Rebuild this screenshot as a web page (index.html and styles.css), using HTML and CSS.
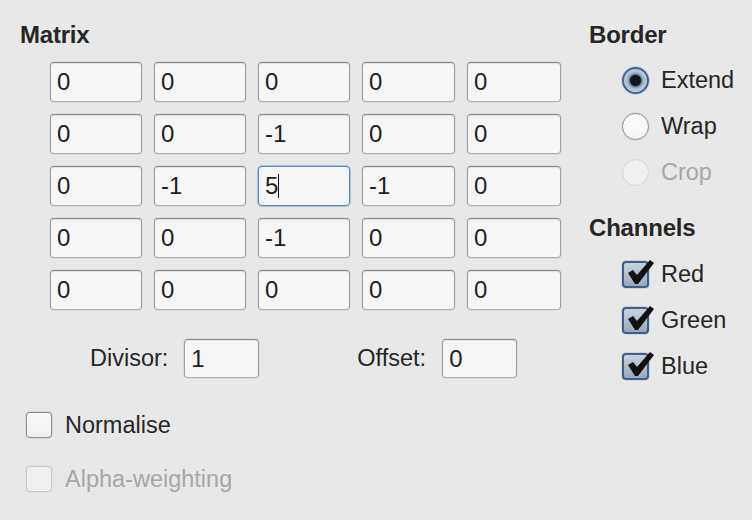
FILE: index.html
```html
<!DOCTYPE html>
<html>
<head>
<meta charset="utf-8">
<link rel="stylesheet" href="styles.css">
</head>
<body>
<div class="panel">
  <div class="left">
    <div class="heading">Matrix</div>
    <div class="grid">
      <div class="field">0</div><div class="field">0</div><div class="field">0</div><div class="field">0</div><div class="field">0</div>
      <div class="field">0</div><div class="field">0</div><div class="field">-1</div><div class="field">0</div><div class="field">0</div>
      <div class="field">0</div><div class="field">-1</div><div class="field focus">5<span class="caret"></span></div><div class="field">-1</div><div class="field">0</div>
      <div class="field">0</div><div class="field">0</div><div class="field">-1</div><div class="field">0</div><div class="field">0</div>
      <div class="field">0</div><div class="field">0</div><div class="field">0</div><div class="field">0</div><div class="field">0</div>
    </div>
    <div class="params">
      <div class="param divisor"><span class="plabel">Divisor:</span><div class="field small">1</div></div>
      <div class="param offset"><span class="plabel">Offset:</span><div class="field small">0</div></div>
    </div>
    <div class="opt normalise"><span class="cb"></span><span class="optlabel">Normalise</span></div>
    <div class="opt alpha disabled"><span class="cb dis"></span><span class="optlabel">Alpha-weighting</span></div>
  </div>
  <div class="right">
    <div class="heading">Border</div>
    <div class="choices">
      <div class="choice"><span class="radio on"></span><span class="clabel">Extend</span></div>
      <div class="choice"><span class="radio"></span><span class="clabel">Wrap</span></div>
      <div class="choice disabled"><span class="radio dis"></span><span class="clabel">Crop</span></div>
    </div>
    <div class="heading channels">Channels</div>
    <div class="choices checks">
      <div class="choice"><span class="cb on"><svg class="tick" viewBox="0 0 30 30" width="30" height="30"><path d="M3 15 L8 12 L12 17 L25 2 L29 5 L13 26 L10 26 Z" fill="#111"/></svg></span><span class="clabel">Red</span></div>
      <div class="choice"><span class="cb on"><svg class="tick" viewBox="0 0 30 30" width="30" height="30"><path d="M3 15 L8 12 L12 17 L25 2 L29 5 L13 26 L10 26 Z" fill="#111"/></svg></span><span class="clabel">Green</span></div>
      <div class="choice"><span class="cb on"><svg class="tick" viewBox="0 0 30 30" width="30" height="30"><path d="M3 15 L8 12 L12 17 L25 2 L29 5 L13 26 L10 26 Z" fill="#111"/></svg></span><span class="clabel">Blue</span></div>
    </div>
  </div>
</div>
</body>
</html>
```
FILE: styles.css
```css
html, body {
  margin: 0;
  padding: 0;
  background: #e8e8e8;
  width: 752px;
  height: 520px;
  overflow: hidden;
}
body {
  font-family: "Liberation Sans", Arial, sans-serif;
  color: #262626;
  font-size: 23.5px;
}
.panel {
  display: flex;
}
.left {
  width: 569px;
  padding-left: 20px;
}
.heading {
  font-weight: bold;
  font-size: 24px;
  line-height: 28px;
  margin-top: 21px;
  letter-spacing: -0.2px;
}
.grid {
  display: grid;
  grid-template-columns: 92px 92px 92px 93px 94px;
  grid-auto-rows: 40px;
  column-gap: 12px;
  row-gap: 12px;
  margin-left: 30px;
  margin-top: 13px;
}
.field {
  box-sizing: border-box;
  border: 1px solid #a3a09c;
  border-top-color: #8c8985;
  border-bottom-color: #b2b0ad;
  border-radius: 4px;
  background: #f6f6f6;
  box-shadow: 0 0 0 1px #dcdcdc, inset 0 1px 1px rgba(0,0,0,0.08);
  font-size: 24px;
  line-height: 38px;
  padding-left: 6px;
  color: #222;
  position: relative;
}
.field.focus {
  border: 1px solid #5d86b8;
  box-shadow: 0 0 0 1px #a9c1de;
}
.caret {
  display: inline-block;
  width: 1px;
  height: 24px;
  background: #111;
  vertical-align: -4px;
  margin-left: 0;
}
.params {
  display: flex;
  margin-top: 29px;
  height: 38px;
}
.param {
  display: flex;
  align-items: center;
}
.divisor {
  margin-left: 70px;
}
.offset {
  margin-left: 98px;
}
.plabel {
  margin-right: 16px;
}
.field.small {
  width: 75px;
  height: 39px;
  line-height: 37px;
}
.opt {
  display: flex;
  align-items: center;
  height: 28px;
}
.normalise {
  margin-top: 34px;
  margin-left: 6px;
}
.alpha {
  margin-top: 26px;
  margin-left: 6px;
}
.optlabel {
  margin-left: 13px;
}
.disabled {
  color: #aaa6a2;
}
.cb {
  position: relative;
  box-sizing: border-box;
  width: 26px;
  height: 26px;
  border: 1px solid #8f8f8f;
  border-top-color: #858585;
  border-radius: 4px;
  background: linear-gradient(#f9f9f9, #f0f0f0);
  box-shadow: 0 0 0 1px #dadada;
  flex: none;
}
.cb.dis {
  border-color: #c9c9c9;
  background: #efefef;
  box-shadow: 0 0 0 1px #e0e0e0;
}
.cb.on {
  width: 27px;
  height: 27px;
  border: 2px solid #3d5f8d;
  background: linear-gradient(#c9d3df, #98a9bd);
  box-shadow: 0 0 0 1px #d2d2d2;
}
.tick {
  position: absolute;
  left: 1px;
  top: -5px;
}
.right {
  flex: 1;
}
.choices {
  margin-left: 33px;
  margin-top: 17px;
  display: flex;
  flex-direction: column;
  row-gap: 18px;
}
.choice {
  display: flex;
  align-items: center;
  height: 28px;
}
.clabel {
  margin-left: 12px;
}
.radio {
  box-sizing: border-box;
  width: 27px;
  height: 27px;
  border-radius: 50%;
  border: 1px solid #8f8f8f;
  background: radial-gradient(circle at 50% 35%, #ffffff, #f1f1f1);
  box-shadow: 0 0 0 1px #dadada;
  flex: none;
}
.radio.on {
  border: 2px solid #3f6597;
  background: radial-gradient(circle, #161616 0 5px, #5e7590 6px, #a8b8cc 8px, #c3cfdc 12px);
  box-shadow: 0 0 0 1px #cfcfcf;
}
.radio.dis {
  border-color: #d4d4d4;
  background: #f0f0f0;
  box-shadow: none;
}
.channels {
  margin-top: 28px;
}
.checks {
  margin-top: 18px;
}
```
